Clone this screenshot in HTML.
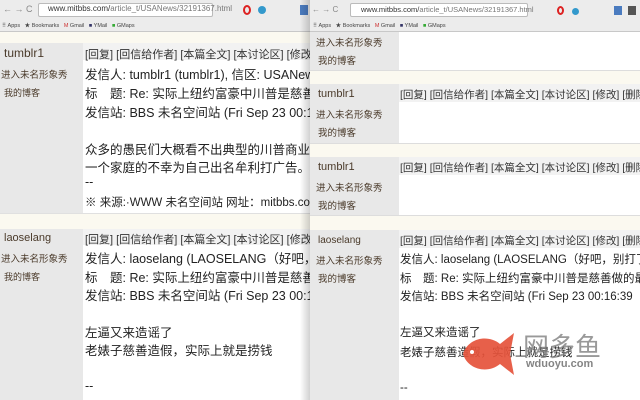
<!DOCTYPE html>
<html><head><meta charset="utf-8"><style>
*{margin:0;padding:0;box-sizing:border-box}
body{width:640px;height:400px;overflow:hidden;position:relative;background:#fff;font-family:"Liberation Sans","Noto Sans CJK SC",sans-serif;color:#222}
.a{position:absolute;white-space:nowrap}
.L{font-size:12.5px}
.H{font-size:11px;color:#333}
.R{font-size:9.5px}
.br{color:#4a3a2a}
</style></head><body>
<!-- LEFT WINDOW -->
<div class="a" style="left:0;top:0;width:310px;height:32px;background:#ececec;border-bottom:1px solid #c8c8c8"></div>
<div class="a" style="left:38px;top:3px;width:175px;height:14px;background:#fff;border:1px solid #bbb;border-radius:2px"></div>
<div class="a" style="left:48px;top:4px;font-size:8px;color:#333">www.mitbbs.com/<span style="color:#777">article_t/USANews/32191367.html</span></div>
<div class="a" style="left:3px;top:4px;font-size:9px;color:#888">← → C</div>
<div class="a" style="left:243px;top:5px;width:8px;height:10px;border:2px solid #d22;border-radius:50%"></div>
<div class="a" style="left:258px;top:6px;width:8px;height:8px;background:#39c;border-radius:50%"></div>
<div class="a" style="left:300px;top:5px;width:8px;height:10px;background:#4a7bbf"></div>
<div class="a" style="left:2px;top:21px;font-size:5.5px;color:#444">⠿ Apps &nbsp;&nbsp;★ Bookmarks &nbsp;&nbsp;<span style="color:#c33">M</span> Gmail &nbsp;&nbsp;<span style="color:#336">■</span> YMail &nbsp;&nbsp;<span style="color:#3a3">■</span> GMaps</div>
<div class="a" style="left:0;top:32px;width:310px;height:11px;background:#fbf9f0"></div>
<div class="a" style="left:0;top:43px;width:83px;height:170px;background:#e8e8e8"></div>
<div class="a" style="left:83px;top:43px;width:227px;height:17px;background:#f2f2f2"></div>
<div class="a br" style="left:4px;top:46px;font-size:12px">tumblr1</div>
<div class="a br" style="left:1px;top:67px;font-size:9.5px">进入未名形象秀</div>
<div class="a br" style="left:4px;top:86px;font-size:9px">我的博客</div>
<div class="a H" style="left:85px;top:46px">[回复] [回信给作者] [本篇全文] [本讨论区] [修改] [删除]</div>
<div class="a L" style="left:85px;top:64px">发信人: tumblr1 (tumblr1), 信区: USANews</div>
<div class="a L" style="left:85px;top:83px">标　题: Re: 实际上纽约富豪中川普是慈善做的</div>
<div class="a L" style="left:85px;top:102px">发信站: BBS 未名空间站 (Fri Sep 23 00:13:3</div>
<div class="a L" style="left:85px;top:139px">众多的愚民们大概看不出典型的川普商业行为一</div>
<div class="a L" style="left:85px;top:157px">一个家庭的不幸为自己出名牟利打广告。</div>
<div class="a L" style="left:85px;top:175px">--</div>
<div class="a L" style="left:85px;top:194px;font-size:11.5px">※ 来源:·WWW 未名空间站 网址：mitbbs.com</div>
<div class="a" style="left:0;top:213px;width:310px;height:16px;background:#fbf9f0;border-top:1px solid #e0e0e0"></div>
<div class="a" style="left:0;top:229px;width:83px;height:171px;background:#e8e8e8"></div>
<div class="a" style="left:83px;top:229px;width:227px;height:16px;background:#f2f2f2"></div>
<div class="a br" style="left:4px;top:232px;font-size:11px">laoselang</div>
<div class="a br" style="left:1px;top:251px;font-size:9.5px">进入未名形象秀</div>
<div class="a br" style="left:4px;top:270px;font-size:9px">我的博客</div>
<div class="a H" style="left:85px;top:231px">[回复] [回信给作者] [本篇全文] [本讨论区] [修改] [删除]</div>
<div class="a L" style="left:85px;top:248px">发信人: laoselang (LAOSELANG（好吧，别打了</div>
<div class="a L" style="left:85px;top:267px">标　题: Re: 实际上纽约富豪中川普是慈善做的</div>
<div class="a L" style="left:85px;top:285px">发信站: BBS 未名空间站 (Fri Sep 23 00:16:3</div>
<div class="a L" style="left:85px;top:322px">左逼又来造谣了</div>
<div class="a L" style="left:85px;top:340px">老婊子慈善造假，实际上就是捞钱</div>
<div class="a L" style="left:85px;top:379px">--</div>
<!-- shadow -->
<div class="a" style="left:300px;top:0;width:10px;height:400px;background:linear-gradient(90deg,rgba(0,0,0,0),rgba(0,0,0,.18))"></div>
<!-- RIGHT WINDOW -->
<div class="a" style="left:310px;top:0;width:330px;height:400px;background:#fff;border-left:1px solid #999"></div>
<div class="a" style="left:310px;top:0;width:330px;height:32px;background:#ececec;border-bottom:1px solid #c8c8c8"></div>
<div class="a" style="left:312px;top:5px;font-size:8px;color:#888">← → C</div>
<div class="a" style="left:350px;top:3px;width:178px;height:14px;background:#fff;border:1px solid #bbb;border-radius:2px"></div>
<div class="a" style="left:361px;top:5px;font-size:7.5px;color:#333">www.mitbbs.com/<span style="color:#777">article_t/USANews/32191367.html</span></div>
<div class="a" style="left:557px;top:6px;width:7px;height:9px;border:2px solid #d22;border-radius:50%"></div>
<div class="a" style="left:572px;top:8px;width:7px;height:7px;background:#39c;border-radius:50%"></div>
<div class="a" style="left:614px;top:6px;width:8px;height:9px;background:#4a7bbf"></div>
<div class="a" style="left:628px;top:6px;width:8px;height:9px;background:#555"></div>
<div class="a" style="left:313px;top:21px;font-size:5.5px;color:#444">⠿ Apps &nbsp;&nbsp;★ Bookmarks &nbsp;&nbsp;<span style="color:#c33">M</span> Gmail &nbsp;&nbsp;<span style="color:#336">■</span> YMail &nbsp;&nbsp;<span style="color:#3a3">■</span> GMaps</div>
<div class="a" style="left:310px;top:32px;width:89px;height:38px;background:#e8e8e8"></div>
<div class="a R br" style="left:316px;top:35px">进入未名形象秀</div>
<div class="a R br" style="left:318px;top:53px">我的博客</div>
<div class="a" style="left:310px;top:70px;width:330px;height:14px;background:#fbf9f0;border-top:1px solid #ddd"></div>
<div class="a" style="left:310px;top:84px;width:89px;height:59px;background:#e8e8e8"></div>
<div class="a" style="left:399px;top:84px;width:241px;height:18px;background:#f2f2f2"></div>
<div class="a br" style="left:318px;top:88px;font-size:11px">tumblr1</div>
<div class="a R br" style="left:316px;top:107px">进入未名形象秀</div>
<div class="a R br" style="left:318px;top:125px">我的博客</div>
<div class="a" style="left:400px;top:87px;color:#333;font-size:10.5px">[回复] [回信给作者] [本篇全文] [本讨论区] [修改] [删除</div>
<div class="a" style="left:310px;top:143px;width:330px;height:14px;background:#fbf9f0;border-top:1px solid #ddd"></div>
<div class="a" style="left:310px;top:157px;width:89px;height:58px;background:#e8e8e8"></div>
<div class="a" style="left:399px;top:157px;width:241px;height:18px;background:#f2f2f2"></div>
<div class="a br" style="left:318px;top:161px;font-size:11px">tumblr1</div>
<div class="a R br" style="left:316px;top:180px">进入未名形象秀</div>
<div class="a R br" style="left:318px;top:198px">我的博客</div>
<div class="a" style="left:400px;top:160px;color:#333;font-size:10.5px">[回复] [回信给作者] [本篇全文] [本讨论区] [修改] [删除</div>
<div class="a" style="left:310px;top:215px;width:330px;height:15px;background:#fbf9f0;border-top:1px solid #ddd"></div>
<div class="a" style="left:310px;top:230px;width:89px;height:170px;background:#e8e8e8"></div>
<div class="a" style="left:399px;top:230px;width:241px;height:18px;background:#f2f2f2"></div>
<div class="a br" style="left:318px;top:235px;font-size:10px">laoselang</div>
<div class="a R br" style="left:316px;top:253px">进入未名形象秀</div>
<div class="a R br" style="left:318px;top:271px">我的博客</div>
<div class="a" style="left:400px;top:233px;color:#333;font-size:10.5px">[回复] [回信给作者] [本篇全文] [本讨论区] [修改] [删除</div>
<div class="a" style="left:400px;top:251px;font-size:11.5px">发信人: laoselang (LAOSELANG（好吧，别打了,</div>
<div class="a" style="left:400px;top:270px;font-size:11.5px">标　题: Re: 实际上纽约富豪中川普是慈善做的最小</div>
<div class="a" style="left:400px;top:288px;font-size:11.5px">发信站: BBS 未名空间站 (Fri Sep 23 00:16:39</div>
<div class="a" style="left:400px;top:324px;font-size:11.5px">左逼又来造谣了</div>
<div class="a" style="left:400px;top:344px;font-size:11.5px">老婊子慈善造假，实际上就是捞钱</div>
<div class="a" style="left:400px;top:382px;font-size:11.5px">--</div>
<!-- watermark -->
<svg class="a" style="left:460px;top:328px" width="70" height="52" viewBox="0 0 70 52">
<path d="M3 26 C8 10 28 6 40 16 L54 5 L50 26 L54 47 L40 36 C28 46 8 42 3 26Z" fill="#e5533b" opacity=".92"/>
<circle cx="12" cy="24" r="2" fill="#fff"/>
</svg>
<div class="a" style="left:523px;top:327px;font-size:26px;color:#777;opacity:.75">网多鱼</div>
<div class="a" style="left:526px;top:358px;font-size:11px;color:#666;font-weight:bold;opacity:.8">wduoyu.com</div>
</body></html>
